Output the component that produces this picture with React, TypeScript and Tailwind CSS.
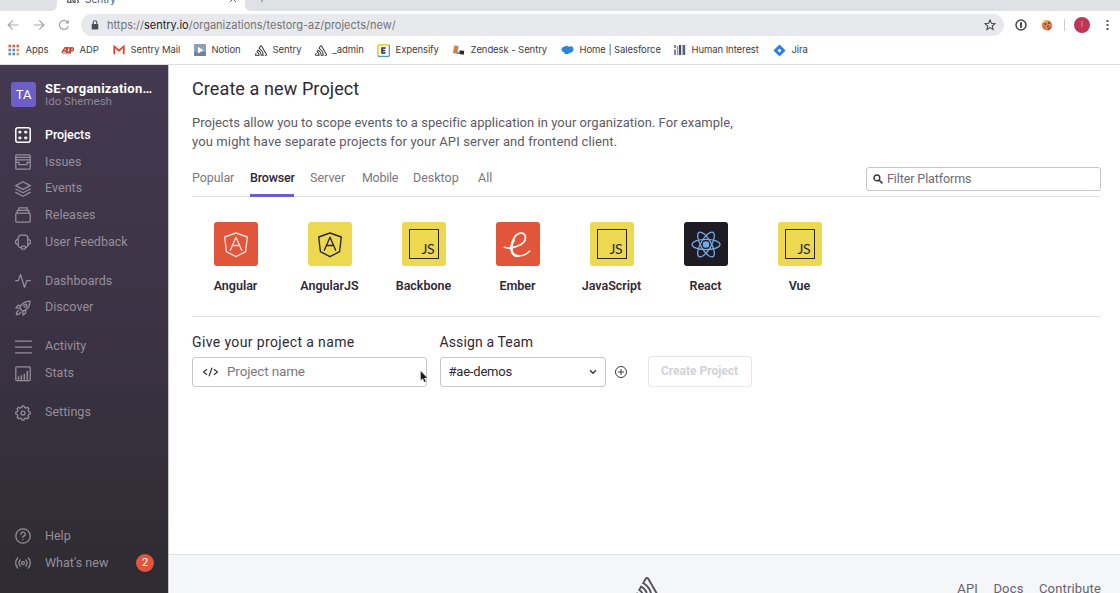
import React from "react";

type P = { children?: React.ReactNode; className?: string };

const Stroke = ({ children, className = "size-4" }: P) => (
  <svg viewBox="0 0 16 16" className={className} fill="none" stroke="currentColor" strokeWidth="1.25" strokeLinecap="round" strokeLinejoin="round">
    {children}
  </svg>
);

const SentryMark = ({ className }: { className: string }) => (
  <svg viewBox="0 0 50 44" className={className} fill="currentColor">
    <path d="M29 2.26a4.67 4.67 0 0 0-8 0L14.42 13.53A32.21 32.21 0 0 1 32.17 40.19H27.55A27.68 27.68 0 0 0 12.09 17.47L6 28a15.92 15.92 0 0 1 9.23 12.17H4.62A.76.76 0 0 1 4 39.06l2.94-5a10.74 10.74 0 0 0-3.36-1.9l-2.91 5a4.54 4.54 0 0 0 1.69 6.24A4.66 4.66 0 0 0 4.62 44H19.15a19.4 19.4 0 0 0-8-17.31l2.31-4A23.87 23.87 0 0 1 23.76 44H36.07a35.88 35.88 0 0 0-16.41-31.8l4.67-8a.77.77 0 0 1 1.05-.27c.53.29 20.29 34.77 20.66 35.17a.76.76 0 0 1-.68 1.13H40.6q.09 1.91 0 3.81h4.78A4.59 4.59 0 0 0 50 39.43a4.49 4.49 0 0 0-.62-2.28Z" />
  </svg>
);

const bookmarks: { label: string; width: string; icon: React.ReactNode }[] = [
  {
    label: "Apps", width: "w-[53px]",
    icon: (
      <svg viewBox="0 0 12 12" className="size-3">
        {["#d8604f", "#d8604f", "#d8604f", "#7d8a94", "#4a8ddb", "#c79a58", "#7d8a94", "#4a8ddb", "#d6a04f"].map((c, i) => (
          <rect key={i} x={0.5 + (i % 3) * 4} y={0.7 + Math.floor(i / 3) * 4} width="2.6" height="2.6" fill={c} />
        ))}
      </svg>
    ),
  },
  {
    label: "ADP", width: "w-[52px]",
    icon: (
      <svg viewBox="0 0 13 12" className="h-3 w-[13px]" fill="none" stroke="#c8452f" strokeWidth="1.4">
        <path d="M.8 8.6 4 3.7h1.2l.3 4.9M2.4 7h3M5.7 8.3l1-4.6h1.2c1.6 0 1.5 4.6-.7 4.6zM9.3 9l.8-5.2h1.2c1.6 0 1.4 3-.3 3H9.8" />
        <path d="M1 9.2h9" stroke="#8b4a3c" strokeWidth=".7" />
      </svg>
    ),
  },
  {
    label: "Sentry Mail", width: "w-[81px]",
    icon: (
      <svg viewBox="0 0 12 12" className="size-3">
        <path d="M1 2h10v8H1z" fill="#eeeeef" />
        <path d="M1.2 10.2V2.4L6 6.6l4.8-4.2v7.8" fill="none" stroke="#d5412f" strokeWidth="1.6" />
      </svg>
    ),
  },
  {
    label: "Notion", width: "w-[61px]",
    icon: (
      <svg viewBox="0 0 12 12" className="size-3">
        <rect width="12" height="12" rx=".8" fill="#8a9fb9" />
        <rect y="8" width="12" height="4" rx=".8" fill="#6c83a1" />
        <path d="m4 2.7 5.4 3.5L4 9.6z" fill="#fff" />
      </svg>
    ),
  },
  { label: "Sentry", width: "w-[60px]", icon: <SentryMark className="h-[11px] w-3 text-[#2d2b31]" /> },
  { label: "_admin", width: "w-[62px]", icon: <SentryMark className="h-[11px] w-3 text-[#2d2b31]" /> },
  {
    label: "Expensify", width: "w-[75px]",
    icon: (
      <svg viewBox="0 0 13 13" className="size-[13px]">
        <path d="M.9 12V1.9a1 1 0 0 1 1-1H12" fill="none" stroke="#ecd53d" strokeWidth="1.8" />
        <path d="M12.3 1v10.3a1 1 0 0 1-1 1H1" fill="none" stroke="#5590c4" strokeWidth="1.3" />
        <path d="M8.7 4H5v5h3.7M5 6.5h3.2" fill="none" stroke="#2d2d36" strokeWidth="1.5" />
      </svg>
    ),
  },
  {
    label: "Zendesk - Sentry", width: "w-[109px]",
    icon: (
      <svg viewBox="0 0 13 12" className="h-3 w-[13px]">
        <path d="M2.3 1.5 6.7 2 5.4 9.7.8 9z" fill="#c0875a" />
        <path d="m7.6 6.5 4.6.2-.5 4-4.4-.6z" fill="#26242c" />
        <path d="M5 8h2v2H5z" fill="#9a8a83" />
      </svg>
    ),
  },
  {
    label: "Home | Salesforce", width: "w-[113px]",
    icon: (
      <svg viewBox="0 0 13 12" className="h-3 w-[13px]" fill="#2f86d4">
        <circle cx="3.3" cy="5.4" r="2.7" /><circle cx="5.5" cy="4.1" r="2.4" /><circle cx="9.5" cy="5.2" r="3" /><circle cx="5.5" cy="7.7" r="2.5" /><circle cx="8" cy="7" r="2.4" />
      </svg>
    ),
  },
  {
    label: "Human Interest", width: "w-[99px]",
    icon: (
      <svg viewBox="0 0 12 12" className="size-3">
        <path d="M1 1v3M1 5.5V11" stroke="#5a6a78" strokeWidth="1.6" /><path d="M3.6 2v9" stroke="#8d949e" strokeWidth="1.4" />
        <path d="M6 1v10" stroke="#4d4d57" strokeWidth="2" /><path d="M8.2 1v10" stroke="#b5a79d" strokeWidth="1" /><path d="M10 1v10" stroke="#4b62b4" strokeWidth="2.4" />
      </svg>
    ),
  },
  {
    label: "Jira", width: "w-[60px]",
    icon: (
      <svg viewBox="0 0 13 13" className="size-[13px]">
        <path d="M6.5.4 12.6 6.5l-6.1 6.1L.4 6.5z" fill="#2f7fdc" /><path d="M6.5 4.6 8.4 6.5 6.5 8.4 4.6 6.5z" fill="#fff" />
      </svg>
    ),
  },
];

function Browser() {
  return (
    <header className="h-[65px] shrink-0 overflow-hidden border-b border-[#dcdde0] bg-white font-['Inter',sans-serif]">
      <div className="flex h-[11px] bg-white">
        <div className="w-[57px] rounded-br-md bg-[#dfe1e4]" />
        <div className="flex h-[11px] w-[188px] items-end justify-between overflow-hidden bg-white pr-2 pl-[10px]">
          <div className="flex h-[11px] items-end gap-[6px]">
            <SentryMark className="mb-[8px] h-[11px] w-3 text-[#2d2b31]" />
            <span className="mb-[6px] text-[10px] leading-[12px] text-[#555]">Sentry</span>
          </div>
          <svg viewBox="0 0 8 8" className="mb-[8px] size-2" stroke="#666" fill="none"><path d="m1 1 6 6M7 1 1 7" /></svg>
        </div>
        <div className="flex h-[11px] flex-1 rounded-bl-md bg-[#dfe1e4] pl-[15px]">
          <svg viewBox="0 0 4 3" className="h-[3px] w-1"><path d="M2 0v2" stroke="#777" /></svg>
        </div>
      </div>
      <div className="flex h-[28px] items-center">
        <div className="flex w-[81px] items-center gap-[14px] pl-[7px] text-[#a5a7aa]">
          <svg viewBox="0 0 12 12" className="size-3" fill="none" stroke="currentColor" strokeWidth="1.2"><path d="M11.3 6H1.2M5.8 1.3 1.1 6l4.7 4.7" /></svg>
          <svg viewBox="0 0 12 12" className="size-3" fill="none" stroke="currentColor" strokeWidth="1.2"><path d="M.7 6h10.1M6.2 1.3 10.9 6l-4.7 4.7" /></svg>
          <svg viewBox="0 0 12 12" className="-ml-[1px] size-3" fill="none" stroke="currentColor" strokeWidth="1.3"><path d="M10.3 7.2A4.5 4.5 0 1 1 9.4 3l1 1" /><path d="M10.9.8v3.8H7.1z" fill="currentColor" stroke="none" /></svg>
        </div>
        <div className="flex h-[22px] w-[923px] items-center rounded-full bg-[#e8e9ec] pr-[8px] pl-[10px]">
          <svg viewBox="0 0 8 10" className="h-[10px] w-2"><rect x=".7" y="4" width="6.6" height="5.5" rx=".7" fill="#4c4e52" /><path d="M2.2 4.2V2.6a1.8 1.8 0 0 1 3.6 0v1.6" fill="none" stroke="#4c4e52" strokeWidth="1.1" /></svg>
          <span className="ml-[8px] flex-1 text-[11px] tracking-[-0.01px] text-[#737477]">https://<span className="text-[#1f2023]">sentry.io</span>/organizations/testorg-az/projects/new/</span>
          <svg viewBox="0 0 12 12" className="size-3" fill="none" stroke="#4b4d51" strokeWidth="1.1"><path d="m6 1 1.4 3.3 3.6.3-2.7 2.4.8 3.5L6 8.6l-3.1 1.9.8-3.5L1 4.6l3.6-.3z" /></svg>
        </div>
        <div className="flex items-center pl-[11px]">
          <svg viewBox="0 0 12 12" className="size-3"><circle cx="6" cy="6" r="5" fill="none" stroke="#44464d" strokeWidth="1.5" /><path d="M6 3.2v5.600" stroke="#44464d" strokeWidth="2" /></svg>
          <svg viewBox="0 0 12 12" className="ml-[14px] size-3"><circle cx="6" cy="6.2" r="5.3" fill="#d9895a" /><path d="M2 3.2A5 5 0 0 1 8 1.3L4 4z" fill="#ecc43c" /><path d="M6 9.7 10.7 7A5 5 0 0 1 7 11.2z" fill="#c44235" /><circle cx="4.2" cy="5" r="1" fill="#613c31" /><circle cx="8" cy="4" r="1" fill="#613c31" /><circle cx="7" cy="7.3" r="1" fill="#8a4435" /><circle cx="3.4" cy="8" r=".8" fill="#c44235" /></svg>
          <div className="ml-[11px] h-3 w-px bg-[#cbccd0]" />
          <div className="ml-[9px] flex size-4 items-center justify-center rounded-full bg-[#bf3558] text-[7px] text-[#e9b9c5]">I</div>
          <svg viewBox="0 0 3 12" className="ml-[16px] h-3 w-[3px]" fill="#55575b"><rect x=".5" y="1" width="2" height="2" /><rect x=".5" y="5" width="2" height="2" /><rect x=".5" y="9" width="2" height="2" /></svg>
        </div>
      </div>
      <nav className="flex h-[22px] items-center pl-[7.5px] text-[9.5px] tracking-[-0.08px] text-[#3d3e42]">
        {bookmarks.map((b) => (
          <div key={b.label} className={"flex shrink-0 items-center gap-[6px] whitespace-nowrap " + b.width}>
            {b.icon}
            <span>{b.label}</span>
          </div>
        ))}
      </nav>
    </header>
  );
}

const groups: { label: string; icon: React.ReactNode }[][] = [
  [
    { label: "Projects", icon: <Stroke><rect x=".8" y=".8" width="14.4" height="14.4" rx="2" strokeWidth="1.5" /><path d="M4.2 4.2H6V6H4.2zM10 4.2h1.8V6H10zM4.2 10H6v1.8H4.2zM10 10h1.8v1.8H10z" fill="currentColor" strokeWidth=".8" /></Stroke> },
    { label: "Issues", icon: <Stroke><rect x=".8" y=".8" width="14.4" height="14.4" rx="1" /><path d="M.8 3.3h14.4M.8 5.8h14.4M.8 8.3H4v2.4h8V8.3h3.2" /></Stroke> },
    { label: "Events", icon: <Stroke><path d="m8 .8 7.2 3.8L8 8.4.8 4.6zM.8 8 8 11.8 15.2 8M.8 11.4 8 15.2l7.2-3.8" /></Stroke> },
    { label: "Releases", icon: <Stroke><rect x=".8" y="6" width="14.4" height="9.2" rx="1" /><path d="M2.2 6V3.4h11.6V6M3.8 3.4V.9h8.4v2.5" /></Stroke> },
    { label: "User Feedback", icon: <Stroke><path d="M3.2 5.3V4a3 3 0 0 1 3-3h3.6a3 3 0 0 1 3 3v1.3M3.2 5.3H2.4L.5 7v2l1.9 1.7h.8zM12.8 5.3h.8L15.5 7v2l-1.9 1.7h-.8zM3.2 10.7v.6a2.3 2.3 0 0 0 2.3 2.3h.8M12.8 10.7v.6a2.3 2.3 0 0 1-2.3 2.3" /><rect x="6.3" y="12.2" width="4.2" height="2.8" rx="1" /></Stroke> },
  ],
  [
    { label: "Dashboards", icon: <Stroke><path d="M.7 7.6h2.6L5.5 1.5l4 12.8 2.4-6.7h3.4" /></Stroke> },
    { label: "Discover", icon: <Stroke><path d="M4.7 8.2C6 4.1 9.4 1 15 1c0 5.6-3.1 9-7.2 10.3zM6 5.4H3L.9 8l3.8.2M10.6 10v3L8 15.1l-.2-3.8M3.7 10.5c-1.6.5-2.4 2.4-2.3 4.1 1.7.1 3.6-.7 4.1-2.3" /><circle cx="10.4" cy="5.6" r="1.6" /></Stroke> },
  ],
  [
    { label: "Activity", icon: <Stroke className="h-4 w-[17px] scale-x-105"><path d="M.4 2.2h15.2M.4 8h15.2M.4 13.8h15.2" /></Stroke> },
    { label: "Stats", icon: <Stroke><rect x=".8" y=".9" width="14.4" height="13.6" rx="1" /><path d="M3.5 13.8v-3.3M6.3 13.8V9.3M9.3 13.8V7.8M12.3 13.8V5" strokeWidth="1.5" strokeLinecap="butt" /></Stroke> },
  ],
  [
    { label: "Settings", icon: <Stroke><circle cx="8" cy="8" r="2" /><path d="M6.6 2.4 7 .8h2l.4 1.6 1.6.7 1.5-.9 1.4 1.4-.9 1.5.7 1.5 1.5.4v2l-1.5.4-.7 1.6.9 1.4-1.4 1.5-1.5-.9-1.6.6L9 15.2H7l-.4-1.6-1.6-.6-1.5.9-1.4-1.5.9-1.4-.7-1.6L.8 9V7l1.5-.4.7-1.5-.9-1.5 1.4-1.4 1.5.9z" /></Stroke> },
  ],
];

function Row({ icon, label, active, children }: { icon: React.ReactNode; label: string; active?: boolean; children?: React.ReactNode }) {
  return (
    <div className={"flex h-[26.7px] items-center pl-[15px] text-[12.5px] " + (active ? "font-medium text-white" : "text-[#968f9b]")}>
      <span className="flex w-[17px]">{icon}</span>
      <span className={active ? "ml-[13px] tracking-[-0.1px]" : "ml-[13px] tracking-[0.03px]"}>{label}</span>
      {children}
    </div>
  );
}

function Sidebar() {
  return (
    <aside className="flex w-[169px] shrink-0 flex-col border-r border-[#c9c6cd] bg-linear-to-b from-[#443950] via-[#3b3344] to-[#2e2b31] pb-[16.5px]">
      <div className="flex h-[56.9px] shrink-0 items-start pt-[17px] pl-[11px]">
        <div className="flex size-[25px] items-center justify-center rounded-[3px] bg-[#6c5fc7] text-[13px] text-white">TA</div>
        <div className="ml-[9px]">
          <div className="text-[13px] leading-[13px] font-bold tracking-[0.26px] whitespace-nowrap text-white">SE-organization…</div>
          <div className="text-[11.5px] leading-[12px] tracking-[0.02px] text-[#8f8698]">Ido Shemesh</div>
        </div>
      </div>
      <div className="flex flex-col gap-[12.4px]">
        {groups.map((g, i) => (
          <div key={i}>
            {g.map((r) => <Row key={r.label} {...r} active={r.label === "Projects"} />)}
          </div>
        ))}
      </div>
      <div className="mt-auto">
        <Row label="Help" icon={<Stroke><circle cx="8" cy="8" r="7.2" /><path d="M5.9 6.2A2.1 2.1 0 1 1 8 8.3v1M8 11.5v.2" /></Stroke>} />
        <Row label="What's new" icon={<Stroke><circle cx="8" cy="8" r="1.5" /><path d="M5.2 5a4.2 4.2 0 0 0 0 6M10.8 5a4.2 4.2 0 0 1 0 6M2.7 3a7.2 7.2 0 0 0 0 10M13.3 3a7.2 7.2 0 0 1 0 10" /></Stroke>}>
          <span className="mr-[14px] ml-auto flex size-[18px] items-center justify-center rounded-full bg-[#e1563a] text-[11px] text-white">2</span>
        </Row>
      </div>
    </aside>
  );
}

const AngularIcon = () => (
  <svg viewBox="0 0 44 44" className="size-11" fill="none" stroke="currentColor" strokeWidth="1.35" strokeLinejoin="round">
    <path d="m22 11 11.3 4-1.7 14.6L22 34.7l-9.6-5.1L10.7 15z" />
    <path d="m16.3 28.2 5.7-13 5.7 13M18.3 23.5h7.4" strokeLinecap="round" />
  </svg>
);
const JsIcon = () => (
  <div className="flex size-[30px] items-end justify-end border border-[#2a2430] pr-[3px] pb-[2px] font-['Lato',sans-serif] text-[14px] leading-[14px] tracking-[-0.2px]">JS</div>
);
const EmberIcon = () => (
  <svg viewBox="0 0 44 44" className="size-11" fill="none" stroke="#fff" strokeLinecap="round" strokeLinejoin="round">
    <path d="M8.5 25.3C14 27.5 29.5 23.5 29.5 15.7 29.5 12.900 27.800 11.200 25.300 11.200 19.500 11.200 15.200 19 15.200 25.500 15.200 31 17.700 34 22.300 34 27 34 31 32 33.500 29.200" strokeWidth="1.7" />
    <path d="M17.800 18.300C16.200 20.500 15.400 23 15.400 25.500 15.400 30.500 17.800 33.700 21.800 33.900" strokeWidth="2.3" />
  </svg>
);
const ReactIcon = () => (
  <svg viewBox="0 0 44 44" className="size-11" fill="none" stroke="#78a9ea" strokeWidth="1.3">
    <circle cx="22" cy="22.5" r="2.6" fill="#78a9ea" />
    <ellipse cx="22" cy="22.5" rx="14" ry="5.2" />
    <ellipse cx="22" cy="22.5" rx="14" ry="5.2" transform="rotate(60 22 22.5)" />
    <ellipse cx="22" cy="22.5" rx="14" ry="5.2" transform="rotate(120 22 22.5)" />
  </svg>
);

const platforms: { name: string; box: string; icon: React.ReactNode }[] = [
  { name: "Angular", box: "bg-[#e1563a] text-[#f5ded8]", icon: <AngularIcon /> },
  { name: "AngularJS", box: "bg-[#ecd951] text-[#2a2430]", icon: <AngularIcon /> },
  { name: "Backbone", box: "bg-[#ecd951] text-[#2a2430]", icon: <JsIcon /> },
  { name: "Ember", box: "bg-[#e1563a]", icon: <EmberIcon /> },
  { name: "JavaScript", box: "bg-[#ecd951] text-[#2a2430]", icon: <JsIcon /> },
  { name: "React", box: "bg-[#1f1b23]", icon: <ReactIcon /> },
  { name: "Vue", box: "bg-[#ecd951] text-[#2a2430]", icon: <JsIcon /> },
];

const tabs = [
  { label: "Popular", cls: "mr-[16px] w-[42px] tracking-[-0.1px]" },
  { label: "Browser", cls: "mr-[16px] w-[44px] border-b-[3px] border-[#6c5fc7] font-medium tracking-[-0.2px] text-[#2f2936]" },
  { label: "Server", cls: "mr-[16px] w-[36px]" },
  { label: "Mobile", cls: "mr-[15px] w-[36px] tracking-[-0.3px]" },
  { label: "Desktop", cls: "mr-[20px] w-[45px]" },
  { label: "All", cls: "w-[16px]" },
];

function Main() {
  return (
    <main className="flex min-w-0 flex-1 flex-col text-[#2f2936]">
      <section className="flex h-[489px] shrink-0 flex-col pr-[19px] pl-[23px]">
        <h1 className="mt-[12px] text-[18px] leading-[24px] tracking-[0.1px] whitespace-nowrap">Create a new Project</h1>
        <p className="mt-[12px] text-[13px] leading-[19px] tracking-[0.03px] whitespace-nowrap text-[#5d5a64]">
          Projects allow you to scope events to a specific application in your organization. For example,<br />
          <span className="tracking-[0.12px]">you might have separate projects for your API server and frontend client.</span>
        </p>
        <div className="mt-[15px] flex h-[31px] items-start justify-between border-b border-[#e0e1e6]">
          <div className="flex text-[12.5px] whitespace-nowrap text-[#7b7780]">
            {tabs.map((t) => <div key={t.label} className={"flex h-[31px] flex-col leading-[24px] " + t.cls}>{t.label}</div>)}
          </div>
          <label className="mt-px flex h-[24px] w-[235px] items-center rounded-[3px] border border-[#c5c6cc] pl-[5.5px] text-[12.5px] tracking-[-0.1px] text-[#6d6975]">
            <svg viewBox="0 0 10 10" className="mr-[4.5px] size-[10px]" fill="none" stroke="#3a3540"><circle cx="3.9" cy="3.9" r="2.9" strokeWidth="1.4" /><path d="m6.2 6.2 3.2 3.2" strokeWidth="1.6" /></svg>
            Filter Platforms
          </label>
        </div>
        <div className="flex h-[120px] border-b border-[#e0e1e6] pt-[25px]">
          {platforms.map((p) => (
            <div key={p.name} className="flex w-[94px] flex-col items-center first:-ml-[3.5px]">
              <div className={"flex size-11 items-center justify-center rounded-[3px] " + p.box}>{p.icon}</div>
              <div className="mt-[12px] text-[12.5px] leading-[16px] font-semibold">{p.name}</div>
            </div>
          ))}
        </div>
        <div className="mt-[14px] flex">
          <div className="w-[247.5px]">
            <div className="text-[14px] leading-[22px] tracking-[0.37px]">Give your project a name</div>
            <div className="relative mt-[4px] flex h-[30px] w-[235px] items-center rounded-[3px] border border-[#c5c6cc] pb-px pl-[9px] text-[13.5px] tracking-[-0.15px] text-[#7b7780]">
              <svg viewBox="0 0 17 10" className="mr-[8px] h-[10px] w-[17px]" fill="none" stroke="#3a3540" strokeWidth="1.2"><path d="M5 2.2 1.5 5 5 7.8M12 2.2 15.5 5 12 7.8M10 .8 7 9.2" /></svg>
              Project name
              <svg viewBox="0 0 8 13" className="absolute top-[12px] left-[227px] h-[13px] w-2"><path d="M.6.8v9.8l2.200-2 1.500 3.600 1.600-.7-1.500-3.400h3z" fill="#17131c" stroke="#fff" strokeWidth=".3" /></svg>
            </div>
          </div>
          <div className="w-[208px]">
            <div className="text-[14px] leading-[22px] tracking-[0.13px]">Assign a Team</div>
            <div className="mt-[4px] flex items-center">
              <div className="flex h-[30px] w-[166px] items-center justify-between rounded-[3px] border border-[#c5c6cc] pr-[8px] pl-[8px] text-[13px] tracking-[-0.2px]">
                #ae-demos
                <svg viewBox="0 0 8 6" className="h-[6px] w-2" fill="none" stroke="#3a3540" strokeWidth="1.4"><path d="m1 1.200 3 3 3-3" /></svg>
              </div>
              <svg viewBox="0 0 12 12" className="ml-[9px] size-3" fill="none" stroke="#3a3540"><circle cx="6" cy="6" r="5.5" /><path d="M6 3v6M3 6h6" /></svg>
            </div>
          </div>
          <button className="mt-[25px] h-[31px] w-[104px] rounded-[3px] border border-[#e6e6e9] pb-[2px] text-[12px] font-bold whitespace-nowrap text-[#d2d2d6]">Create Project</button>
        </div>
      </section>
      <footer className="flex flex-1 justify-between overflow-hidden border-t border-[#e0e1e4] bg-[#f5f6f8] pr-[19px]">
        <SentryMark className="mt-[22px] ml-[466px] h-[21px] w-[24px] shrink-0 text-[#55515b]" />
        <div className="mt-[25px] flex gap-[15.5px] text-[13px] leading-[18px] tracking-[0.15px] whitespace-nowrap text-[#66636c]">
          <span>API</span><span>Docs</span><span>Contribute</span>
        </div>
      </footer>
    </main>
  );
}

export default function App() {
  return (
    <div className="flex h-[593px] w-[1120px] flex-col overflow-hidden bg-white font-['Roboto',sans-serif]">
      <Browser />
      <div className="flex min-h-0 flex-1">
        <Sidebar />
        <Main />
      </div>
    </div>
  );
}
